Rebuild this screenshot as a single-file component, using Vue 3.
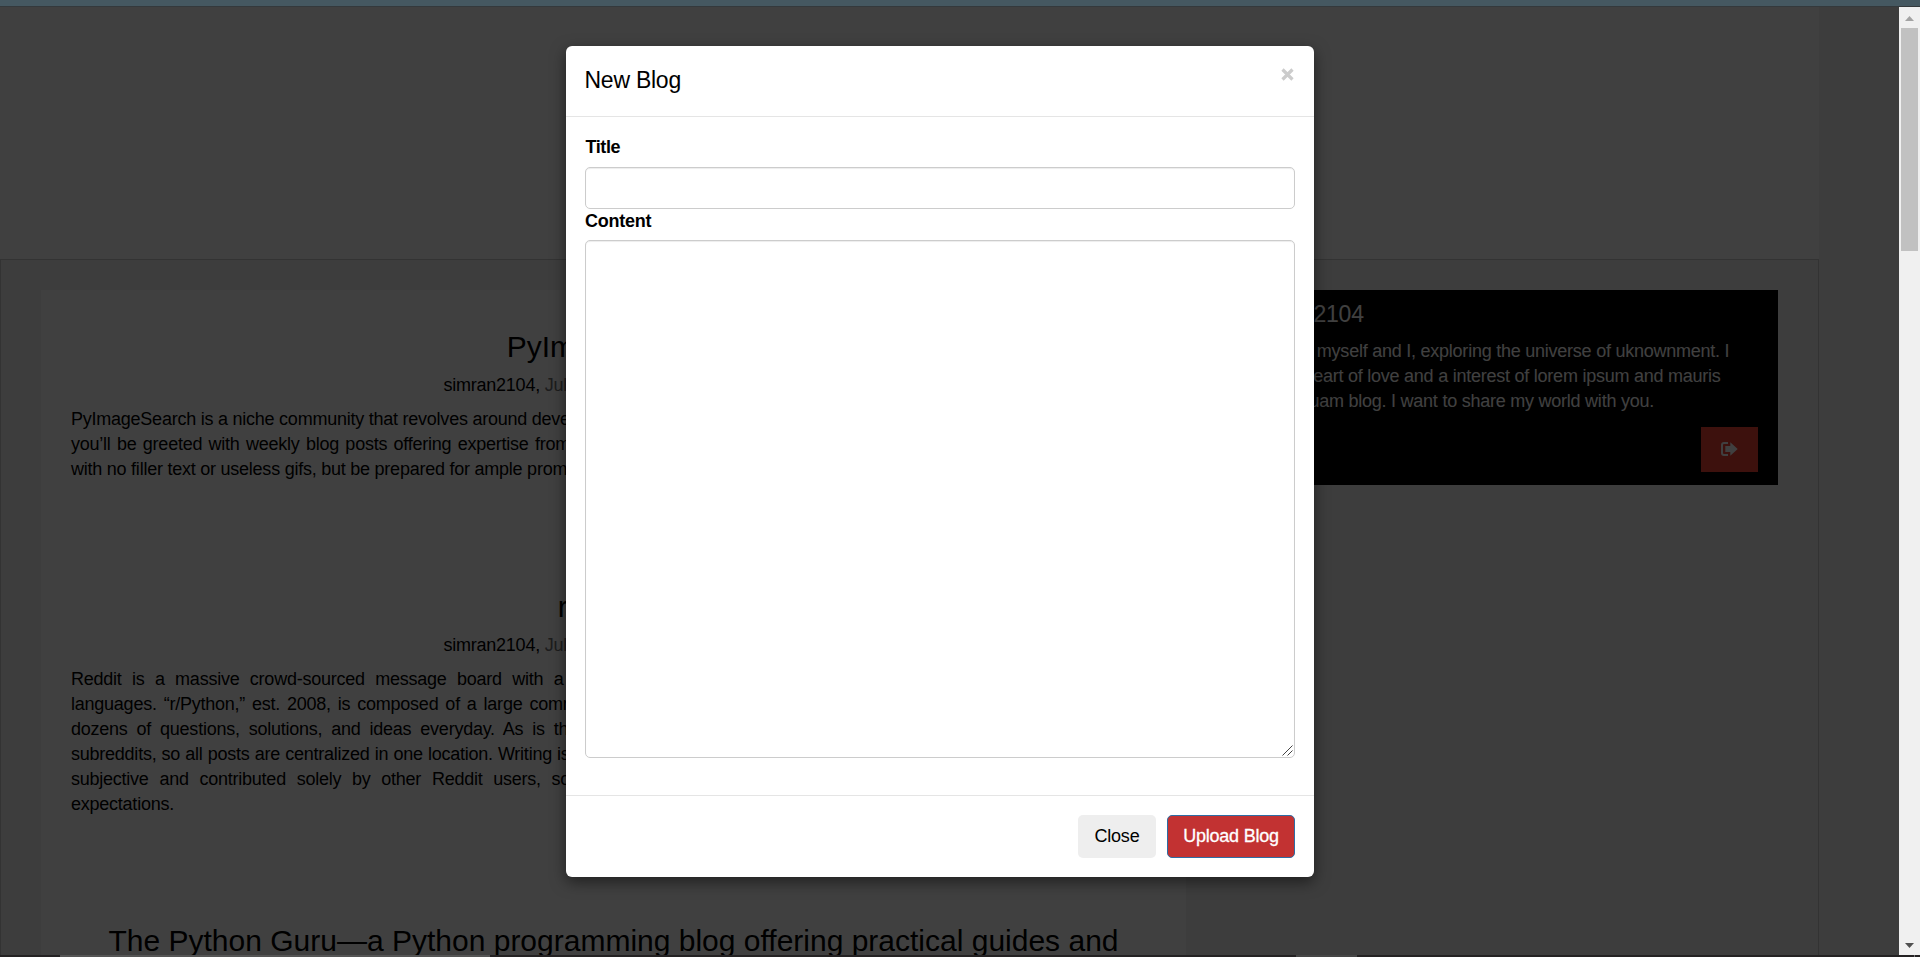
<script setup>
import { ref } from 'vue'

const title = ref('')
const content = ref('')

const posts = [
  {
    title: 'PyImageSearch',
    date: 'July 2, 2020',
    lines: [
      { text: 'PyImageSearch is a niche community that revolves around developing', gap: 0 },
      { text: 'you’ll be greeted with weekly blog posts offering expertise from the', gap: 1.6 },
      { text: 'with no filler text or useless gifs, but be prepared for ample promotion', gap: 0 },
    ],
  },
  {
    title: 'r/Python',
    date: 'July 2, 2020',
    lines: [
      { text: 'Reddit is a massive crowd-sourced message board with a variety', gap: 5.65 },
      { text: 'languages. “r/Python,” est. 2008, is composed of a large community', gap: 2.2 },
      { text: 'dozens of questions, solutions, and ideas everyday. As is the', gap: 4.2 },
      { text: 'subreddits, so all posts are centralized in one location. Writing is', gap: 0.4 },
      { text: 'subjective and contributed solely by other Reddit users, so set', gap: 6 },
      { text: 'expectations.', gap: 0 },
    ],
  },
]
</script>

<template>
  <div class="screen">
    <div class="top-strip"></div>
    <div class="viewport">
      <div class="page">
        <div class="site">
          <div class="banner"></div>
          <div class="board">
            <main class="posts">
              <article v-for="post in posts" :key="post.title" class="post">
                <h2>{{ post.title }}</h2>
                <p class="byline">simran2104, <span>{{ post.date }}</span></p>
                <p v-for="line in post.lines" :key="line.text" class="line" :style="{ wordSpacing: line.gap + 'px' }">{{ line.text }}</p>
              </article>
              <article class="post">
                <h2>The Python Guru—a Python programming blog offering practical guides and</h2>
              </article>
            </main>
            <aside class="profile">
              <h4>simran2104</h4>
              <p>Just me, myself and I, exploring the universe of uknownment. I<br>have a heart of love and a interest of lorem ipsum and mauris<br>neque quam blog. I want to share my world with you.</p>
              <button class="logout" aria-label="Log out">
                <svg width="17" height="14" viewBox="0 0 17 14">
                  <path d="M7 1H3Q1 1 1 3V11Q1 13 3 13H7" fill="none" stroke="#fff" stroke-width="2" />
                  <path d="M4.3 4H9.3V0.3L16.7 7L9.3 13.7V10H4.3Z" fill="#fff" />
                </svg>
              </button>
            </aside>
          </div>
        </div>
        <div class="backdrop"></div>
        <div class="modal">
          <header>
            <h4>New Blog</h4>
            <button class="dismiss" aria-label="Dismiss">
              <svg width="13" height="13" viewBox="0 0 13 13"><path d="M1.5 1.5L11.5 11.5M11.5 1.5L1.5 11.5" stroke="#ccc" stroke-width="3.2" /></svg>
            </button>
          </header>
          <form @submit.prevent>
            <label for="title" class="first">Title</label>
            <input id="title" v-model="title" type="text">
            <label for="content" class="second">Content</label>
            <div class="area">
              <textarea id="content" v-model="content"></textarea>
              <svg class="grip" width="11" height="11" viewBox="0 0 11 11"><path d="M0.5 10.5L10.5 0.5M5.5 10.5L10.5 5.5" stroke="#444" stroke-width="1" /></svg>
            </div>
          </form>
          <footer>
            <button class="btn close">Close</button>
            <button class="btn upload">Upload Blog</button>
          </footer>
        </div>
      </div>
      <div class="scrollbar">
        <svg width="9" height="5" viewBox="0 0 9 5"><path d="M0 5L4.5 0L9 5Z" fill="#a3a3a3" /></svg>
        <div class="thumb"></div>
        <svg class="down" width="9" height="5" viewBox="0 0 9 5"><path d="M0 0L4.5 5L9 0Z" fill="#505050" /></svg>
      </div>
    </div>
    <div class="bottom-strip"><i class="window"></i><i class="task"></i><i class="edge"></i></div>
  </div>
</template>

<style>
html, body { margin: 0; overflow: hidden; }
</style>

<style scoped>
* { box-sizing: border-box; }
.screen { width: 1920px; height: 957px; display: flex; flex-direction: column; overflow: hidden; font: 18px/25px "Liberation Sans", Arial, sans-serif; letter-spacing: -.24px; color: #000; }
.top-strip { height: 7px; flex: none; background: #455861; border-bottom: 1px solid #34393c; }
.viewport { height: 948px; display: flex; overflow: hidden; }
.page { position: relative; width: 1899px; height: 948px; overflow: hidden; background: #f4f4f4; }
.site { width: 1819px; background: #fff; }
.banner { height: 252px; }
.board { height: 900px; border: 1px solid #ccc; background: #f4f4f4; padding: 30px 40px; display: flex; align-items: flex-start; gap: 30px; }
h2, h4, p { margin: 0; font-weight: 400; }
.posts { width: 1145px; height: 900px; flex: none; background: #fff; padding: 37px 30px; }
.post { margin-bottom: 104px; }
.post:first-child { margin-bottom: 105px; }
.post h2 { font-size: 30px; line-height: 39px; letter-spacing: 0; text-align: center; white-space: nowrap; }
.byline { width: 340px; margin: 7px auto 9px; }
.byline span { color: #757575; }
.line { white-space: nowrap; }
.profile { width: 562px; height: 195px; background: #000; color: #fff; padding: 6px 20px 0 30px; display: flex; flex-direction: column; }
h4 { font-size: 23px; line-height: 36px; letter-spacing: -.25px; }
.profile p { white-space: nowrap; margin-top: 7px; }
.logout { align-self: flex-end; margin-top: 13px; width: 57px; height: 45px; flex: none; border: 0; background: #f44336; padding: 0 0 2px; display: flex; align-items: center; justify-content: center; }
.backdrop { position: absolute; inset: 0; background: rgba(0, 0, 0, .75); }
.modal { position: absolute; left: 566px; top: 39px; width: 748px; height: 831px; background: #fff; border-radius: 6px; box-shadow: 0 5px 15px rgba(0, 0, 0, .5); display: flex; flex-direction: column; }
header { height: 71px; flex: none; display: flex; justify-content: space-between; padding: 16px 20.5px 0 18.5px; border-bottom: 1px solid #e5e5e5; }
.dismiss { border: 0; padding: 6px 0 0; background: none; align-self: flex-start; line-height: 0; }
form { height: 678px; flex: none; padding: 16px 19px 0; display: flex; flex-direction: column; }
label { font-weight: 700; height: 25px; }
.first { margin: 2px 0 7px .5px; letter-spacing: -.4px; }
.second { margin-bottom: 6px; }
input, textarea { width: 710px; border: 1px solid #ccc; border-radius: 5px; box-shadow: inset 0 1px 1px rgba(0, 0, 0, .075); background: #fff; outline: none; font: inherit; padding: 6px 12px; }
input { height: 42px; flex: none; }
.area { position: relative; height: 518px; flex: none; }
textarea { height: 518px; display: block; resize: none; }
.grip { position: absolute; right: 2px; bottom: 2px; }
footer { flex: 1; border-top: 1px solid #e5e5e5; display: flex; justify-content: flex-end; gap: 11px; padding: 19px 19px 0; }
.btn { height: 43px; border: 0; border-radius: 5px; padding: 0; font: inherit; letter-spacing: -.24px; color: #000; }
.close { width: 78px; background: #eee; }
.upload { width: 128px; background: #c23232; border: 1px solid #2e6da4; color: #fff; -webkit-text-stroke: .3px #fff; }
.scrollbar { width: 21px; flex: none; background: #f0f0f0; display: flex; flex-direction: column; align-items: center; padding: 9px 0 7px; }
.thumb { width: 17px; height: 223px; background: #c1c1c1; margin-top: 7px; }
.down { margin-top: auto; }
.bottom-strip { height: 2px; flex: none; background: #242223; display: flex; }
.bottom-strip i { height: 2px; }
.window { width: 430px; margin-left: 60px; background: #555; }
.task { width: 61px; margin-left: 806px; background: #464646; }
.edge { width: 1px; margin-left: 557px; background: #777; }
</style>
